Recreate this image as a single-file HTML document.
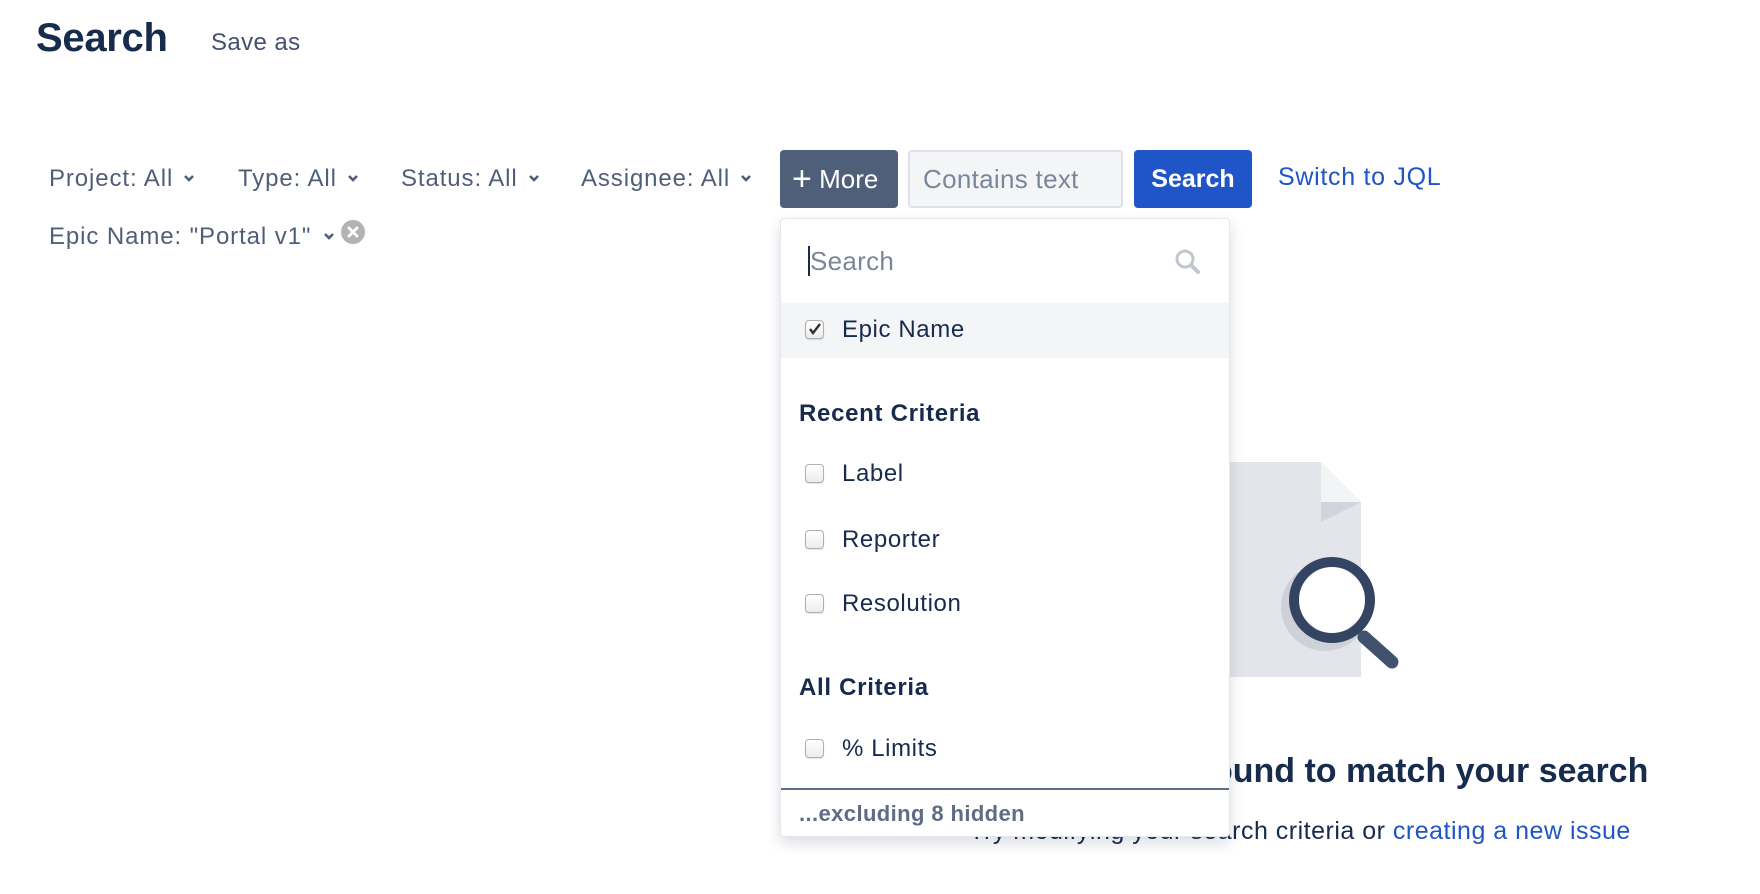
<!DOCTYPE html>
<html><head><meta charset="utf-8"><style>
*{margin:0;padding:0;box-sizing:border-box}
body{width:1760px;height:894px;background:#fff;font-family:"Liberation Sans",sans-serif;position:relative;overflow:hidden;color:#172b4d}
.a{position:absolute;white-space:nowrap}
.f{font-size:24px;letter-spacing:0.9px;color:#505f79;line-height:30px}
.chev{display:inline-block;width:12px;height:10px;margin-left:10px;vertical-align:3px}
.cb{position:absolute;left:24px;width:19px;height:19px;border:1px solid #b0b0b0;border-radius:4px;background:linear-gradient(#fff,#ececec);box-shadow:0 1px 1px rgba(0,0,0,.12)}
.it{position:absolute;left:61px;font-size:24px;letter-spacing:0.6px;color:#172b4d;line-height:30px}
.h{position:absolute;left:18px;font-size:24px;letter-spacing:0.7px;font-weight:bold;color:#172b4d;line-height:30px}
</style></head><body>
<div class="a" style="left:36px;top:15px;font-size:40px;font-weight:bold;color:#172b4d;line-height:46px;letter-spacing:-0.3px">Search</div>
<div class="a" style="left:211px;top:28px;font-size:24px;letter-spacing:0.4px;color:#42526e;line-height:30px">Save as</div>

<div class="a f" style="left:49px;top:164px">Project: All<svg class="chev" viewBox="0 0 12 10"><path d="M2 3l4 4 4-4" stroke="#505f79" stroke-width="2.6" fill="none"/></svg></div>
<div class="a f" style="left:238px;top:164px">Type: All<svg class="chev" viewBox="0 0 12 10"><path d="M2 3l4 4 4-4" stroke="#505f79" stroke-width="2.6" fill="none"/></svg></div>
<div class="a f" style="left:401px;top:164px">Status: All<svg class="chev" viewBox="0 0 12 10"><path d="M2 3l4 4 4-4" stroke="#505f79" stroke-width="2.6" fill="none"/></svg></div>
<div class="a f" style="left:581px;top:164px">Assignee: All<svg class="chev" viewBox="0 0 12 10"><path d="M2 3l4 4 4-4" stroke="#505f79" stroke-width="2.6" fill="none"/></svg></div>

<div class="a" style="left:780px;top:150px;width:118px;height:58px;background:#505f79;border-radius:4px;color:#fff;font-size:26px;line-height:58px;padding-left:12px"><span style="font-size:34px;vertical-align:-2px;font-weight:300">+</span>&nbsp;More</div>
<div class="a" style="left:908px;top:150px;width:215px;height:58px;background:#f4f5f7;border:2px solid #dfe1e6;border-radius:4px;color:#7a869a;font-size:26px;letter-spacing:0.3px;line-height:54px;padding-left:13px">Contains text</div>
<div class="a" style="left:1134px;top:150px;width:118px;height:58px;background:#1f55c6;border-radius:4px;color:#fff;font-size:25px;font-weight:bold;line-height:58px;text-align:center">Search</div>
<div class="a" style="left:1278px;top:162px;font-size:25px;letter-spacing:0.7px;color:#1f55c6;line-height:30px">Switch to JQL</div>

<div class="a f" style="left:49px;top:220px">Epic Name: "Portal v1"<svg class="chev" viewBox="0 0 12 10" style="margin-left:12px"><path d="M2 3l4 4 4-4" stroke="#505f79" stroke-width="2.6" fill="none"/></svg><svg width="24" height="24" viewBox="0 0 24 24" style="vertical-align:0px;margin-left:6px"><circle cx="12" cy="12" r="12" fill="#b3b3b3"/><path d="M8 8l8 8M16 8l-8 8" stroke="#fff" stroke-width="2.8" stroke-linecap="round"/></svg></div>

<!-- empty state -->
<svg class="a" style="left:1150px;top:455px" width="260" height="230" viewBox="1150 455 260 230">
<path d="M1181 462H1321L1361 502V677H1181Z" fill="#e4e5ea"/>
<path d="M1321 462L1361 502H1321Z" fill="#f3f4f6"/>
<path d="M1321 502H1361L1321 522Z" fill="#d2d4dc"/>
<circle cx="1325" cy="607" r="44" fill="#cfd1d9"/>
<circle cx="1332" cy="600" r="38" fill="#fff" stroke="#344563" stroke-width="10"/>
<path d="M1364 637L1392 662" stroke="#42526e" stroke-width="13" stroke-linecap="round"/>
</svg>
<div class="a" style="left:896px;top:750px;width:800px;text-align:center;font-size:34px;font-weight:bold;color:#172b4d;line-height:42px">No issues were found to match your search</div>
<div class="a" style="left:900px;top:816px;width:800px;text-align:center;font-size:25px;letter-spacing:0.5px;color:#172b4d;line-height:30px">Try modifying your search criteria or <span style="color:#1f55c6">creating a new issue</span></div>

<!-- dropdown -->
<div class="a" style="left:780px;top:218px;width:450px;height:619px;background:#fff;border:1px solid #e6e7eb;border-radius:4px;box-shadow:0 6px 14px rgba(9,30,66,.15)">
  <div style="position:absolute;left:27px;top:27px;width:2px;height:30px;background:#172b4d"></div>
  <div style="position:absolute;left:29px;top:26px;font-size:26px;letter-spacing:0.3px;color:#7a869a;line-height:32px">Search</div>
  <svg style="position:absolute;left:393px;top:29px" width="28" height="28" viewBox="0 0 28 28"><circle cx="11" cy="11" r="8" fill="none" stroke="#c1c7d0" stroke-width="3"/><path d="M17 17l7 7" stroke="#c1c7d0" stroke-width="4" stroke-linecap="round"/></svg>
  <div style="position:absolute;left:0;top:84px;width:448px;height:55px;background:#f4f5f7"></div>
  <div class="cb" style="top:101px"></div>
  <svg style="position:absolute;left:27px;top:103px" width="14" height="14" viewBox="0 0 14 14"><path d="M2 7l3 4 7-9" stroke="#333" stroke-width="2.4" fill="none"/></svg>
  <div class="it" style="top:96px">Epic Name</div>
  <div class="h" style="top:180px">Recent Criteria</div>
  <div class="cb" style="top:245px"></div><div class="it" style="top:240px">Label</div>
  <div class="cb" style="top:311px"></div><div class="it" style="top:306px">Reporter</div>
  <div class="cb" style="top:375px"></div><div class="it" style="top:370px">Resolution</div>
  <div class="h" style="top:454px">All Criteria</div>
  <div class="cb" style="top:520px"></div><div class="it" style="top:515px">% Limits</div>
  <div style="position:absolute;left:0;top:569px;width:448px;height:2px;background:#5e6c84"></div>
  <div style="position:absolute;left:18px;top:581px;font-size:22px;letter-spacing:0.4px;font-weight:bold;color:#5e6c84;line-height:28px">...excluding 8 hidden</div>
</div>
</body></html>
